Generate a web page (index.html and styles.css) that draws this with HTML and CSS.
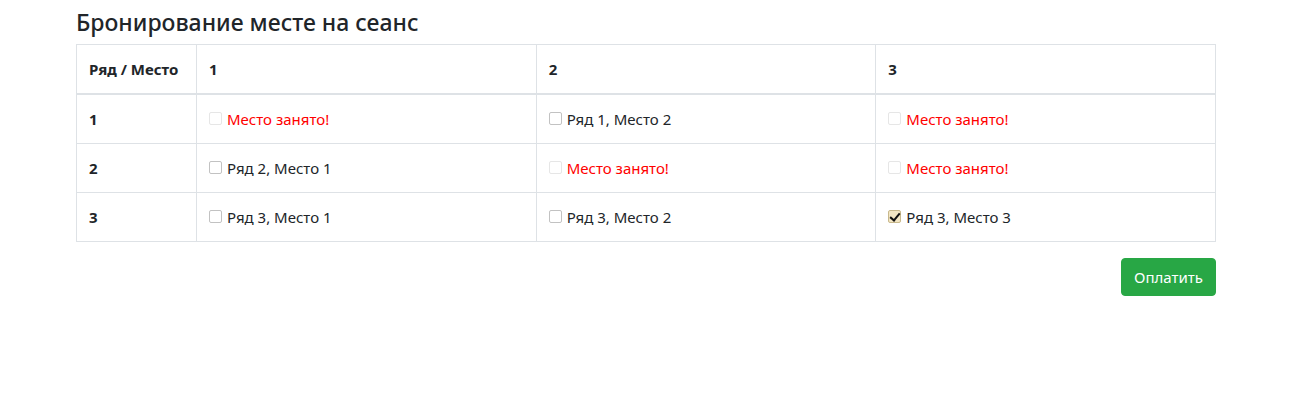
FILE: index.html
```html
<!DOCTYPE html>
<html lang="ru">
<head>
<meta charset="utf-8">
<title>Бронирование</title>
<link rel="stylesheet" href="styles.css">
</head>
<body>
<div class="container">
  <h4 class="title">Бронирование месте на сеанс</h4>
  <table class="seats">
    <thead>
      <tr><th class="c0">Ряд / Место</th><th>1</th><th>2</th><th>3</th></tr>
    </thead>
    <tbody>
      <tr>
        <th>1</th>
        <td><label class="seat taken"><input type="checkbox" disabled> Место занято!</label></td>
        <td><label class="seat"><input type="checkbox"> Ряд 1, Место 2</label></td>
        <td><label class="seat taken"><input type="checkbox" disabled> Место занято!</label></td>
      </tr>
      <tr>
        <th>2</th>
        <td><label class="seat"><input type="checkbox"> Ряд 2, Место 1</label></td>
        <td><label class="seat taken"><input type="checkbox" disabled> Место занято!</label></td>
        <td><label class="seat taken"><input type="checkbox" disabled> Место занято!</label></td>
      </tr>
      <tr>
        <th>3</th>
        <td><label class="seat"><input type="checkbox"> Ряд 3, Место 1</label></td>
        <td><label class="seat"><input type="checkbox"> Ряд 3, Место 2</label></td>
        <td><label class="seat"><input type="checkbox" checked> Ряд 3, Место 3</label></td>
      </tr>
    </tbody>
  </table>
  <div class="actions"><button class="pay" type="button">Оплатить</button></div>
</div>
</body>
</html>
```
FILE: styles.css
```css
* { box-sizing: border-box; }
body {
  margin: 0;
  font-family: "Noto Sans", "Open Sans", sans-serif;
  font-size: 16px;
  line-height: 1.5;
  color: #212529;
  background: #fff;
}
.container {
  width: 1140px;
  margin-left: 76px;
}
.title {
  margin: 8px 0 6px;
  font-size: 23px;
  font-weight: 500;
  line-height: 1.3;
}
.seats {
  width: 100%;
  border-collapse: collapse;
  margin-bottom: 16px;
}
.seats th, .seats td {
  border: 1px solid #dee2e6;
  padding: 12px;
  text-align: left;
  vertical-align: top;
  font-size: 15px;
  line-height: 24px;
}
.seats th { font-weight: 700; }
.seats thead th { border-bottom-width: 2px; vertical-align: bottom; }
.seats .c0 { width: 120px; }
.seat {
  display: flex;
  align-items: center;
  gap: 5px;
  height: 24px;
  color: #212529;
}
.seat.taken { color: #ff0000; }
.seat input {
  appearance: none;
  -webkit-appearance: none;
  flex: none;
  width: 13px;
  height: 13px;
  margin: 0;
  border: 1px solid #c2c2c2;
  border-radius: 2px;
  background: #fff;
  position: relative;
}
.seat input:disabled { border-color: #e6e6e6; }
.seat input:checked {
  background: #f3e6c4;
  border-color: #c9b98c;
}
.seat input:checked::after {
  content: "";
  position: absolute;
  left: 3px;
  top: 0px;
  width: 4px;
  height: 8px;
  border: solid #111;
  border-width: 0 2px 2px 0;
  transform: rotate(40deg);
}
.actions {
  display: flex;
  justify-content: flex-end;
}
.pay {
  font-family: inherit;
  font-size: 15px;
  line-height: 24px;
  padding: 6px 12px;
  color: #fff;
  background: #28a745;
  border: 1px solid #28a745;
  border-radius: 4px;
}
```
